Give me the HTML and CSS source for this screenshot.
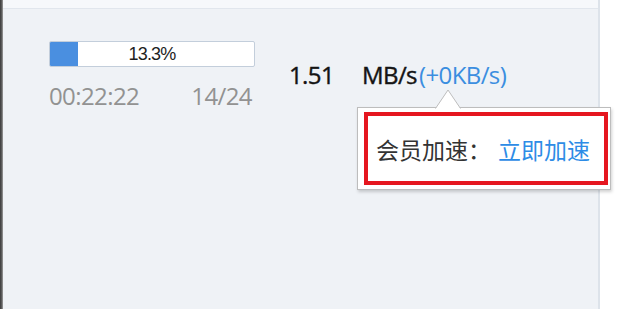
FILE: index.html
```html
<!DOCTYPE html>
<html lang="zh-CN">
<head>
<meta charset="utf-8">
<title>下载任务</title>
<link rel="stylesheet" href="styles.css">
</head>
<body>
<div class="frame">
  <div class="edge"></div>
  <div class="panel">
    <div class="panel-top"></div>
    <div class="task">
      <div class="progress-col">
        <div class="bar">
          <div class="bar-fill" style="width: 28px"></div>
          <div class="bar-label">13.3%</div>
        </div>
        <div class="meta">
          <span class="time">00:22:22</span>
          <span class="count">14/24</span>
        </div>
      </div>
      <div class="speed">
        <span class="speed-val">1.51</span>
        <span class="unit">MB/s</span><span class="extra">(+0KB/s)</span>
      </div>
    </div>
    <div class="tooltip">
      <svg class="tip-arrow" width="26" height="21" viewBox="0 0 26 21">
        <path d="M0.5 20.5 L13 2 L25.5 20.5" fill="#ffffff" stroke="#bdbdbd" stroke-width="1"/>
        <rect x="1.5" y="20" width="23" height="2" fill="#ffffff"/>
      </svg>
      <div class="vip">
        <span class="vip-label">会员加速：</span>
        <span class="vip-link">立即加速</span>
      </div>
    </div>
  </div>
  <div class="side"></div>
</div>
</body>
</html>
```

FILE: styles.css
```css
html, body {
  margin: 0;
  padding: 0;
}

body {
  width: 620px;
  height: 309px;
  overflow: hidden;
  background: #ffffff;
  font-family: "Open Sans", "Noto Sans CJK SC", sans-serif;
}

.frame {
  display: flex;
  height: 309px;
}

.edge {
  width: 3px;
  flex: none;
  background: linear-gradient(to right, #3a3a3a, #5e5e5e 55%, #a0a0a0);
}

.panel {
  position: relative;
  width: 597px;
  flex: none;
  background: #eff2f6;
  border-right: 2px solid #dde3ea;
  box-sizing: border-box;
  display: flex;
  flex-direction: column;
}

.panel-top {
  height: 8px;
  background: #f6f8fb;
  border-bottom: 1px solid #e1e6ed;
}

.side {
  flex: 1;
  background: #ffffff;
}

.task {
  display: flex;
  align-items: flex-start;
  padding: 32px 0 0 46px;
}

.progress-col {
  width: 206px;
}

.bar {
  display: grid;
  height: 26px;
  box-sizing: border-box;
  border: 1px solid #c3cedb;
  border-radius: 2px;
  background: #ffffff;
  overflow: hidden;
}

.bar-fill,
.bar-label {
  grid-area: 1 / 1;
}

.bar-fill {
  background: #4a8fe0;
  height: 100%;
}

.bar-label {
  justify-self: center;
  align-self: center;
  font-family: "Liberation Sans", sans-serif;
  font-size: 18px;
  line-height: 22px;
  color: #1e1e1e;
  letter-spacing: -0.8px;
}

.meta {
  display: flex;
  justify-content: space-between;
  align-items: baseline;
  margin-top: 15px;
  padding-right: 3px;
  color: #929292;
  font-size: 24px;
  line-height: 28px;
  letter-spacing: -0.6px;
}

.speed {
  display: flex;
  align-items: baseline;
  margin: 19px 0 0 34px;
  font-size: 24px;
  line-height: 30px;
  color: #141414;
  letter-spacing: -0.6px;
}

.speed-val,
.unit {
  -webkit-text-stroke: 0.4px #141414;
}

.speed-val {
  width: 73px;
}

.extra {
  margin-left: 2px;
  color: #3b8ee0;
}

.tooltip {
  position: absolute;
  left: 354px;
  top: 107px;
  width: 254px;
  height: 83px;
  box-sizing: border-box;
  padding: 4px 2px 4px 6px;
  background: #ffffff;
  border: 1px solid #bdbdbd;
  box-shadow: 1px 2px 3px rgba(0, 0, 0, 0.18);
}

.tip-arrow {
  position: absolute;
  left: 77px;
  top: -20px;
}

.vip {
  display: flex;
  align-items: center;
  height: 100%;
  box-sizing: border-box;
  border: 4px solid #e5161f;
  padding-left: 8px;
  font-family: "Noto Sans CJK SC", sans-serif;
  font-size: 23px;
}

.vip-label {
  color: #333333;
}

.vip-link {
  margin-left: 7px;
  color: #2d8ce6;
}
```
